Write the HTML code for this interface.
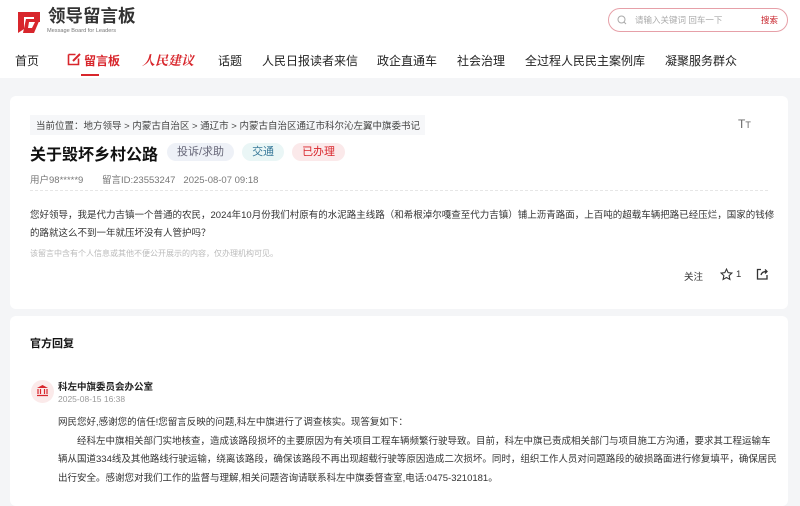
<!DOCTYPE html>
<html><head><meta charset="utf-8"><style>
*{margin:0;padding:0;box-sizing:border-box}
body{width:800px;height:496px;overflow:hidden;background:#f4f5f7;font-family:"Liberation Sans","Noto Sans CJK SC",sans-serif;color:#333;position:relative}
.a{position:absolute;white-space:nowrap}
header{position:absolute;left:0;top:0;width:800px;height:78px;background:#fff}
.card{position:absolute;left:10px;width:778px;background:#fff;border-radius:6px}
.nav{font-size:12px;color:#222;top:52px}
.tag{display:inline-block;font-size:11px;padding:0 10px;height:18px;line-height:18px;border-radius:9px;vertical-align:middle}
</style></head><body>
<header>
<svg class="a" style="left:15px;top:8px" width="30" height="26" viewBox="0 0 30 26"><path d="M3 4h22v10h-6V9H9v12l-6 4z" fill="#d8262c"/><path d="M11 11h14l-6 14H8z" fill="#d8262c"/><path d="M14 14h6l-3 6h-4z" fill="#fff"/></svg>
<div class="a" style="left:48px;top:6px;font-size:17.5px;line-height:20px;font-weight:bold;color:#333">领导留言板</div>
<div class="a" style="left:47px;top:28px;font-size:5.6px;color:#777">Message Board for Leaders</div>
<div class="a" style="left:608px;top:8px;width:180px;height:24px;border:1px solid #e6a0a8;border-radius:12px"></div>
<svg class="a" style="left:617px;top:15px" width="10" height="10"><circle cx="4.5" cy="4.5" r="3.5" fill="none" stroke="#aaa"/><path d="M7 7l2 2" stroke="#aaa"/></svg>
<div class="a" style="top:14px;font-size:8.5px;color:#aaa;left:635px">请输入关键词 回车一下</div>
<div class="a" style="left:761px;top:14px;font-size:8.5px;color:#c8242c">搜索</div>
<div class="a nav" style="left:15px">首页</div>
<svg class="a" style="left:67px;top:52px" width="14" height="14"><path d="M1.5 2.5h7M1.5 2.5v10h10v-6" fill="none" stroke="#d8262c" stroke-width="1.6"/><path d="M6 9l7-7" stroke="#d8262c" stroke-width="2"/></svg>
<div class="a nav" style="left:84px;color:#d8262c;font-weight:bold">留言板</div>
<div class="a" style="left:81px;top:74px;width:18px;height:2px;background:#d8262c"></div>
<div class="a nav" style="left:142px;top:50px;color:#d8262c;font-weight:bold;font-size:13px;font-family:'Noto Serif CJK SC',serif;font-style:italic">人民建议</div>
<div class="a nav" style="left:218px">话题</div>
<div class="a nav" style="left:262px">人民日报读者来信</div>
<div class="a nav" style="left:377px">政企直通车</div>
<div class="a nav" style="left:457px">社会治理</div>
<div class="a nav" style="left:525px">全过程人民民主案例库</div>
<div class="a nav" style="left:665px">凝聚服务群众</div>
</header>
<div class="card" style="top:96px;height:213px"></div>
<div class="a" style="left:30px;top:115px;width:395px;height:20px;background:#f6f7f9"></div>
<div class="a" style="left:36px;top:118px;font-size:9.5px;color:#444">当前位置：地方领导 &gt; 内蒙古自治区 &gt; 通辽市 &gt; 内蒙古自治区通辽市科尔沁左翼中旗委书记</div>
<div class="a" style="left:738px;top:117px;font-size:12px;color:#666">T<span style="font-size:9px">T</span></div>
<div class="a" style="left:30px;top:141px;font-size:16px;font-weight:bold;color:#111">关于毁坏乡村公路</div>
<div class="a" style="left:167px;top:143px"><span class="tag" style="background:#eef1f7;color:#667">投诉/求助</span><span class="tag" style="background:#eaf6f6;color:#3a7a9a;margin-left:8px">交通</span><span class="tag" style="background:#fbe9ea;color:#d8262c;margin-left:8px">已办理</span></div>
<div class="a" style="left:30px;top:172px;font-size:9.5px;color:#777">用户98*****9 <span style="margin-left:16px">留言ID:23553247</span><span style="margin-left:8px">2025-08-07 09:18</span></div>
<div class="a" style="left:30px;top:190px;width:738px;border-top:1px dashed #e6e6e6"></div>
<div class="a" style="left:30px;top:207px;font-size:9.5px;color:#333;line-height:18px">您好领导，我是代力吉镇一个普通的农民，2024年10月份我们村原有的水泥路主线路（和希根淖尔嘎查至代力吉镇）铺上沥青路面，上百吨的超载车辆把路已经压烂，国家的钱修<br>的路就这么不到一年就压坏没有人管护吗？</div>
<div class="a" style="left:30px;top:248px;font-size:8px;color:#bbb">该留言中含有个人信息或其他不便公开展示的内容，仅办理机构可见。</div>
<div class="a" style="left:684px;top:269px;font-size:9.5px;color:#333">关注</div>
<svg class="a" style="left:720px;top:268px" width="13" height="13" viewBox="0 0 24 24"><path d="M12 2l3 6.5 7 .8-5.2 4.8 1.5 7L12 17.6 5.7 21.1l1.5-7L2 9.3l7-.8z" fill="none" stroke="#333" stroke-width="2"/></svg>
<div class="a" style="left:736px;top:269px;font-size:9.5px;color:#333">1</div>
<svg class="a" style="left:756px;top:268px" width="12" height="12"><path d="M5 1.5H1.5v9.5h9.5V7" fill="none" stroke="#333" stroke-width="1.3"/><path d="M5 7C6 4 8 3.5 11 3.5M9 1.5l2 2-2 2" fill="none" stroke="#333" stroke-width="1.3"/></svg>
<div class="card" style="top:316px;height:190px"></div>
<div class="a" style="left:30px;top:335px;font-size:11px;font-weight:bold;color:#111">官方回复</div>
<div class="a" style="left:31px;top:380px;width:23px;height:23px;border-radius:50%;background:#fbeaea"></div>
<svg class="a" style="left:36px;top:384px" width="13" height="13" viewBox="0 0 13 13"><path d="M6.5 1L1 4h11z" fill="#d8262c"/><path d="M2 5v5M4.5 5v5M8.5 5v5M11 5v5M1 11.5h11" stroke="#d8262c" stroke-width="1.2"/></svg>
<div class="a" style="left:58px;top:379px;font-size:9.5px;font-weight:bold;color:#222">科左中旗委员会办公室</div>
<div class="a" style="left:58px;top:394px;font-size:8.5px;color:#999">2025-08-15 16:38</div>
<div class="a" style="left:58px;top:414px;font-size:9.5px;color:#333;line-height:18.7px">网民您好,感谢您的信任!您留言反映的问题,科左中旗进行了调查核实。现答复如下：<br>&emsp;&emsp;经科左中旗相关部门实地核查，造成该路段损坏的主要原因为有关项目工程车辆频繁行驶导致。目前，科左中旗已责成相关部门与项目施工方沟通，要求其工程运输车<br>辆从国道334线及其他路线行驶运输，绕离该路段，确保该路段不再出现超载行驶等原因造成二次损坏。同时，组织工作人员对问题路段的破损路面进行修复填平，确保居民<br>出行安全。感谢您对我们工作的监督与理解,相关问题咨询请联系科左中旗委督查室,电话:0475-3210181。</div>
</body></html>
